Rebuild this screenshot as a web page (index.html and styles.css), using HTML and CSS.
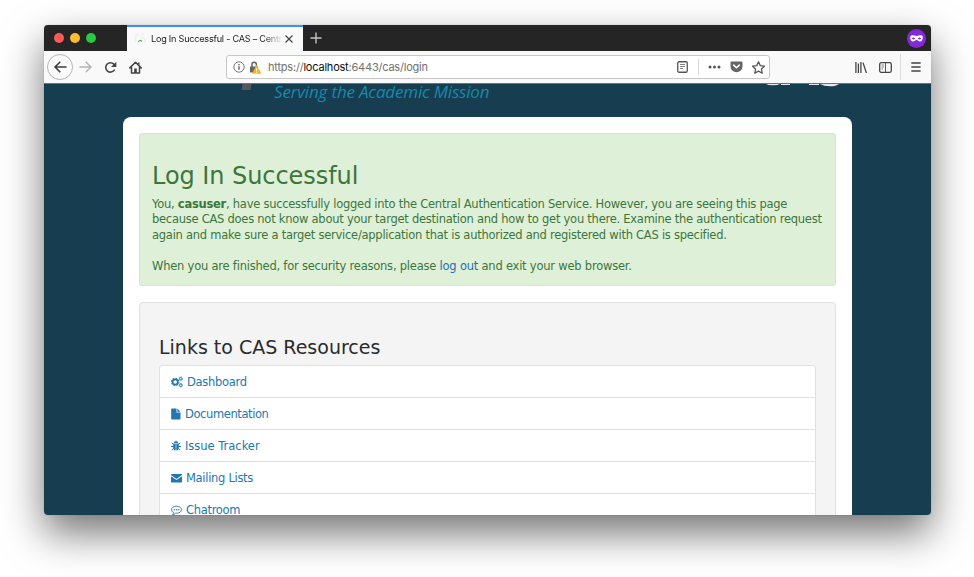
FILE: index.html
```html
<!DOCTYPE html>
<html lang="en">
<head>
<meta charset="utf-8">
<title>Log In Successful - CAS – Central Authentication Service</title>
<link rel="stylesheet" href="styles.css">
</head>
<body>
<div class="window">
  <div class="tabbar">
    <div class="lights"><i class="red"></i><i class="yellow"></i><i class="green"></i></div>
    <div class="tab">
      <svg class="favicon" width="12" height="12" viewBox="0 0 12 12" fill="none"><path d="M5 1.5C1 1 1 7 2 9M7 1h3M7 4l4 2v4" stroke="#eee" stroke-width="1.5"/><path d="M4.500 9c.500-1.800 2-2.200 3.500-.500" stroke="#43b55a" stroke-width="1.100"/></svg>
      <span class="tab-title">Log In Successful - CAS – Centr</span>
      <svg class="tab-close" width="8" height="8" viewBox="0 0 8 8" stroke="#444" stroke-width="1.2"><path d="M.5.5l7 7M7.5.5l-7 7"/></svg>
    </div>
    <svg class="newtab" width="12" height="12" viewBox="0 0 12 12" stroke="#c4c4c4" stroke-width="1.400"><path d="M6 .5v11M.5 6h11"/></svg>
    <svg class="mask" width="19" height="19" viewBox="0 0 19 19"><circle cx="9.5" cy="9.5" r="9.5" fill="#8329d8"/><path fill="#fff" fill-rule="evenodd" d="M3.2 8.2c0-2.5 3-2.4 6.3-1.2 3.300-1.200 6.300-1.300 6.300 1.200 0 2.600-1 4.300-2.800 4.300-1.700 0-2.200-1.400-3.500-1.400s-1.800 1.400-3.500 1.400C4.200 12.500 3.200 10.800 3.200 8.200zM4.900 9.400q1.600 2 3.200 0-1.600-1.700-3.200 0zM10.900 9.400q1.600 2 3.200 0-1.600-1.700-3.200 0z"/></svg>
  </div>
  <div class="toolbar">
    <div class="back"><svg width="13" height="12" viewBox="0 0 13 12" fill="none" stroke="#3d3d3d" stroke-width="1.6" stroke-linecap="round" stroke-linejoin="round"><path d="M12 6H1.200M5.800 1.200L1 6l4.800 4.800"/></svg></div>
    <svg class="forward" width="13" height="12" viewBox="0 0 13 12" fill="none" stroke="#b5b5b5" stroke-width="1.500" stroke-linecap="round" stroke-linejoin="round"><path d="M1 6h10.800M7.200 1.200L12 6l-4.800 4.800"/></svg>
    <svg class="reload" width="13" height="13" viewBox="0 0 13 13"><path d="M10.300 9.100A4.700 4.700 0 1 1 9.800 3.100" fill="none" stroke="#444" stroke-width="1.600" stroke-linecap="round"/><path d="M12.300.8v5.200H7.100z" fill="#444"/></svg>
    <svg class="home" width="13" height="13" viewBox="0 0 13 13"><path d="M.8 6.900L6.500 1.200l5.700 5.700M2.500 6v6h8V6" fill="none" stroke="#444" stroke-width="1.500" stroke-linecap="round" stroke-linejoin="round"/><path d="M5.200 12V7.500h2.600V12zM9 1.500h1.500V4L9 2.800z" fill="#444"/></svg>
    <div class="urlbar">
      <svg class="info" width="12" height="12" viewBox="0 0 12 12" fill="none" stroke="#777"><circle cx="6" cy="6" r="5.200"/><path d="M6 5.200v3.600M6 3v1.300" stroke="#555" stroke-width="1.300"/></svg>
      <svg class="lock" width="12" height="13" viewBox="0 0 12 13"><path d="M3 6V3.700a2.200 2.200 0 0 1 4.400-.4V5" fill="none" stroke="#666" stroke-width="1.500"/><path d="M1 5.500h8v6H1z" fill="#666"/><path d="M7.500 4.600l4.500 8H3.200z" fill="#ffb11a" stroke="#ffb11a" stroke-width=".5" stroke-linejoin="round"/><path d="M7.600 7.300v2.600M7.600 10.700v1" stroke="#fff"/></svg>
      <span class="url">https://<b>localhost</b>:6443/cas/login</span>
      <svg class="reader" width="11" height="12" viewBox="0 0 11 12" fill="none"><rect x=".75" y=".75" width="9.500" height="10.500" rx="1.300" stroke="#555" stroke-width="1.300"/><path d="M3 3.500h5M3 5.500h5M3 7.500h3" stroke="#777" stroke-width=".9"/></svg>
      <i class="sep"></i>
      <svg class="dots" width="13" height="4" viewBox="0 0 13 4" fill="#555"><circle cx="2" cy="2" r="1.500"/><circle cx="6.500" cy="2" r="1.500"/><circle cx="11" cy="2" r="1.500"/></svg>
      <svg class="pocket" width="13" height="12" viewBox="0 0 13 12"><path d="M1.500.5h10q1 0 1 1v3.700a6 6 0 0 1-12 0V1.500q0-1 1-1z" fill="#666"/><path d="M3.700 4.100l2.800 2.700 2.800-2.700" fill="none" stroke="#fff" stroke-width="1.500" stroke-linecap="round" stroke-linejoin="round"/></svg>
      <svg class="star" width="13" height="13" viewBox="0 0 13 13"><path d="M6.500.8l1.800 3.800 4.100.6-3 2.800.8 4.200-3.700-2.100-3.700 2.100.8-4.200-3-2.800 4.100-.6z" fill="none" stroke="#555" stroke-width="1.300" stroke-linejoin="round"/></svg>
    </div>
    <svg class="library" width="12" height="11" viewBox="0 0 12 11" stroke="#444" stroke-width="1.300"><path d="M.9 0v11M3.400 1.500V11M5.900 0v11M8 .6L11.400 11"/></svg>
    <svg class="sidebar" width="13" height="11" viewBox="0 0 13 11" fill="none"><rect x=".7" y=".7" width="11.600" height="9.600" rx="1.500" stroke="#444" stroke-width="1.300"/><path d="M6.500 1v9" stroke="#555"/><path d="M2.500 3h2.500M2.500 5h2.500M2.500 7h1.500" stroke="#777" stroke-width=".9"/></svg>
    <i class="divider"></i>
    <svg class="menu" width="10" height="10" viewBox="0 0 10 10" stroke="#444" stroke-width="1.300" stroke-linecap="round"><path d="M.8 1h8.400M.8 5h8.400M.8 9h8.400"/></svg>
  </div>
  <div class="page">
    <header class="banner">
      <i class="mark"></i>
      <span class="slogan">Serving the Academic Mission</span>
      <svg class="logo" width="75" height="3" viewBox="0 0 75 3" fill="#e5e9ec"><path d="M0 0h14q-2 1.200-7 1.200T0 0zM15 0h9v1H15zM43 0h10v1H43zM54 0h19q-3 2.300-9 2.300T54 0z"/></svg>
    </header>
    <main class="content">
      <section class="success">
        <h1>Log In Successful</h1>
        <p>You, <strong>casuser</strong>, have successfully logged into the Central Authentication Service. However, you are seeing this page<br>because CAS does not know about your target destination and how to get you there. Examine the authentication request<br>again and make sure a target service/application that is authorized and registered with CAS is specified.</p>
        <p class="signout">When you are finished, for security reasons, please <a>log out</a> and exit your web browser.</p>
      </section>
      <section class="resources">
        <h2>Links to CAS Resources</h2>
        <ul>
          <li><svg width="12" height="12" viewBox="0 0 12 12" fill="none" stroke="#2277b0"><circle cx="4.200" cy="6" r="2.600" stroke-width="1.700"/><circle cx="4.200" cy="6" r="3.700" stroke-width="1.100" stroke-dasharray="1.500 1.406"/><circle cx="9.800" cy="2.800" r="1.300"/><circle cx="9.800" cy="2.800" r="2" stroke-width=".6" stroke-dasharray="1 1.094"/><circle cx="9.800" cy="9.200" r="1.300"/><circle cx="9.800" cy="9.200" r="2" stroke-width=".6" stroke-dasharray="1 1.094"/></svg><a>Dashboard</a></li>
          <li class="docs"><svg width="10" height="12" viewBox="0 0 10 12" fill="#2277b0"><path d="M.9.500H5.500v4h4v6.300q0 .7-.7.700H.9q-.7 0-.7-.7V1.200Q.2.500.9.500zM6.300.6l3.100 3.100H6.300z"/></svg><a>Documentation</a></li>
          <li class="issue"><svg width="10" height="12" viewBox="0 0 10 12"><path d="M3 3a2 2 0 0 1 4 0zM2.200 3.600h2.500v7Q2.200 10.300 2.200 7.500zM5.300 3.600h2.500v3.900q0 2.800-2.500 3.100z" fill="#2277b0"/><path d="M2.500 4.600L.8 2.900M2.500 6.500H0M2.700 8.300L1 10.200M7.500 4.600L9.200 2.900M7.500 6.500H10M7.300 8.300L9 10.200" stroke="#2277b0"/></svg><a>Issue Tracker</a></li>
          <li><svg width="11" height="12" viewBox="0 0 11 12" fill="#2277b0"><path d="M.6 1.900h9.800q.6 0 .6.600v.6L5.500 6.900 0 3.100v-.6q0-.6.600-.6zM0 4.300l5.500 3.800L11 4.300v5.600q0 .6-.6.600H.6q-.6 0-.6-.6z"/></svg><a>Mailing Lists</a></li>
          <li><svg width="11" height="12" viewBox="0 0 11 12"><path d="M5.500 2.200c2.800 0 5 1.500 5 3.500s-2.200 3.500-5 3.500h-.9Q3.300 10.600 1.500 10.700 2.500 9.700 2.500 8.500 .5 7.500.5 5.700C.5 3.700 2.700 2.200 5.500 2.200z" fill="none" stroke="#2277b0" stroke-width=".9"/><g fill="#2277b0"><circle cx="3.300" cy="5.700" r=".75"/><circle cx="5.500" cy="5.700" r=".75"/><circle cx="7.700" cy="5.700" r=".75"/></g></svg><a>Chatroom</a></li>
        </ul>
      </section>
    </main>
  </div>
</div>
</body>
</html>
```
FILE: styles.css
```css
* { box-sizing: border-box; }
html, body { margin: 0; height: 100%; background: #fff; overflow: hidden; }
body { padding: 25px 43px 0 44px; font-family: "DejaVu Sans", Verdana, sans-serif; }
svg { display: block; flex: none; }
.window { height: 490px; display: flex; flex-direction: column; overflow: hidden; border-radius: 4px; box-shadow: 0 18px 40px rgba(0, 0, 0, .55), 0 0 1px rgba(0, 0, 0, .4); }

.tabbar { height: 26px; flex: none; display: flex; align-items: center; background: #252525; }
.lights { width: 83px; display: flex; gap: 6px; padding-left: 10px; }
.lights i { width: 10px; height: 10px; border-radius: 50%; }
.red { background: #fc5b57; }
.yellow { background: #fdbc2e; }
.green { background: #28c83f; }
.tab { width: 176px; height: 26px; display: flex; align-items: center; border-top: 2px solid #3b93f0; background: #f9f9fa; padding-left: 7px; }
.tab-title { width: 132px; margin-left: 5px; white-space: nowrap; font: 9.1px/14px Inter, sans-serif; letter-spacing: -.22px; color: #1c1c1c; -webkit-mask-image: linear-gradient(90deg, #000 112px, transparent 132px); mask-image: linear-gradient(90deg, #000 112px, transparent 132px); }
.tab-close { margin-left: 2px; }
.newtab { margin-left: 7px; }
.mask { margin-left: auto; margin-right: 5.5px; }

.toolbar { height: 32px; flex: none; display: flex; align-items: center; background: #f9f9fa; }
.back { width: 26px; height: 26px; margin-left: 3px; border: 1px solid #b4b4b4; border-radius: 50%; background: #fcfcfc; display: grid; place-items: center; }
.forward { margin-left: 6px; }
.reload { margin-left: 12px; }
.home { margin-left: 12px; }
.urlbar { width: 544px; height: 24px; margin-left: 84px; display: flex; align-items: center; border: 1px solid #c6c6c6; border-radius: 3px; background: #fff; padding-left: 6px; }
.lock { margin-left: 4px; }
.url { width: 409px; margin-left: 7px; font: 11px/16px Inter, sans-serif; color: #727272; letter-spacing: -.21px; white-space: nowrap; }
.url b { font-weight: 400; color: #0c0c0d; }
.sep { width: 1px; height: 16px; margin-left: 10px; background: #d7d7d7; }
.dots { margin-left: 9px; }
.pocket { margin-left: 9px; }
.star { margin-left: 9px; }
.library { margin-left: 85px; }
.sidebar { margin-left: 12px; }
.divider { width: 1px; height: 26px; margin-left: 8px; background: #dedede; }
.menu { margin-left: 10px; }

.page { flex: 1; min-height: 0; overflow: hidden; background: #163d50; border-top: 1px solid #607581; }
.banner { height: 33px; display: flex; align-items: flex-start; }
.mark { width: 9px; height: 6px; margin-left: 198px; background: #55595d; transform: skewX(-8deg); }
.slogan { width: 240px; margin-left: 23px; font: italic 17px/15px "Open Sans", sans-serif; letter-spacing: -.18px; color: #1689ad; white-space: nowrap; }
.logo { margin-left: 252px; }
.content { width: 729px; margin-left: 79px; height: 500px; border-radius: 8px 8px 0 0; background: #fff; padding: 16px 16px 0; }
.success { height: 153px; border: 1px solid #d1e9c6; border-radius: 3px; background: #dff0d8; color: #3c763d; padding: 28px 12px 0; }
h1 { margin: 0; font-size: 24px; line-height: 28px; font-weight: 400; white-space: nowrap; letter-spacing: -.06px; }
p { margin: 6.5px 0 0; font-size: 11.5px; line-height: 15.75px; letter-spacing: -.255px; white-space: nowrap; }
p + p { margin-top: 15.5px; }
.signout { letter-spacing: -.22px; }
.success a { color: #1f6fb2; }
.resources { height: 400px; margin-top: 16px; border: 1px solid #e1e1e1; border-radius: 4px; background: #f4f4f4; padding: 32px 19px 0; }
h2 { margin: 0; font-size: 19px; line-height: 24px; font-weight: 400; color: #292b2c; white-space: nowrap; }
ul { list-style: none; margin: 6px 0 0; padding: 0; border: 1px solid #e0e0e0; border-radius: 3px; background: #fff; }
li { height: 32px; display: flex; align-items: center; gap: 4px; padding-left: 11px; font-size: 11.5px; letter-spacing: -.3px; color: #2277b0; border-bottom: 1px solid #e0e0e0; }
.docs { letter-spacing: -.4px; }
.issue { letter-spacing: -.02px; }
```
